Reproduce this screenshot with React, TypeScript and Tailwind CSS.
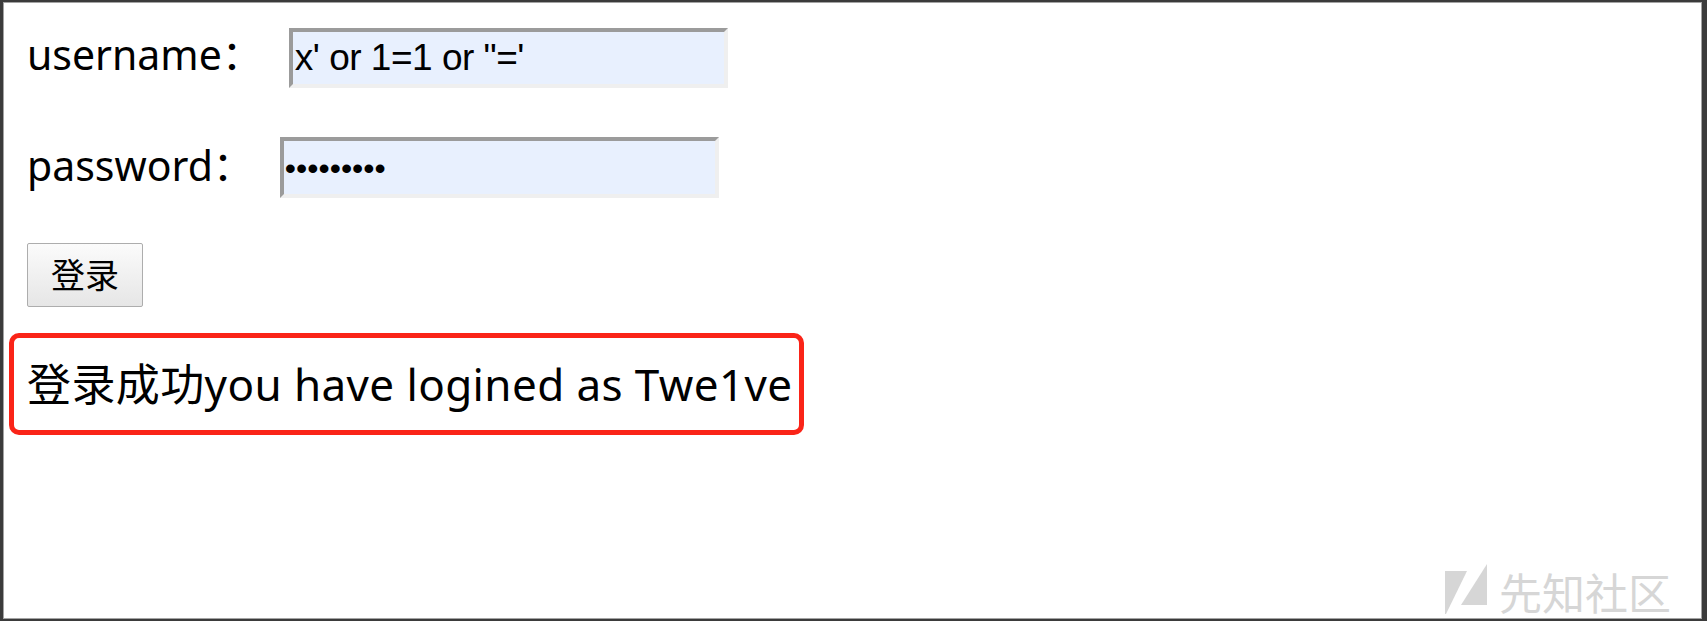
const Logo = () => (
  <svg width="46" height="50" viewBox="0 0 44 50" className="shrink-0">
    <polygon points="1,7 23,7 2,50 1,50" fill="#d6d6d6" />
    <polygon points="43,0 43,41 17,41" fill="#d6d6d6" />
  </svg>
);

const App = () => {
  const font = { fontFamily: '"Noto Sans", "Noto Sans CJK SC", sans-serif' };
  const arial = { fontFamily: '"Liberation Sans", Arial, sans-serif' };

  return (
    <div className="w-[1707px] h-[621px] bg-[#3b3b3b] pt-[2px] pl-[3px] pr-[5px] pb-[2px]">
      <div
        className="w-full h-full bg-white border border-[#a3a3a3] flex flex-col pl-[23px] pt-[25px] text-black"
        style={font}
      >
        {/* username */}
        <div className="flex items-center h-[60px]">
          <span className="text-[41px] leading-none mb-[8px]">username：</span>
          <div className="ml-[26px] w-[439px] h-[60px] bg-[#e8f0fe] border-4 border-t-[#9b9b9b] border-l-[#9b9b9b] border-r-[#efefef] border-b-[#efefef] flex items-center pl-[2px]">
            <span className="text-[37px] text-black tracking-[-0.5px]" style={arial}>
              x' or 1=1 or "='
            </span>
          </div>
        </div>

        {/* password */}
        <div className="flex items-center h-[61px] mt-[49px]">
          <span className="text-[41px] leading-none mb-[5px]">password：</span>
          <div className="ml-[26px] w-[439px] h-[61px] bg-[#e8f0fe] border-4 border-t-[#9b9b9b] border-l-[#9b9b9b] border-r-[#efefef] border-b-[#efefef] flex items-center pl-[1px]">
            <span className="text-[32px] leading-none text-black" style={arial}>
              •••••••••
            </span>
          </div>
        </div>

        {/* submit */}
        <div className="mt-[45px]">
          <button className="w-[116px] h-[64px] border border-[#adadad] rounded-[2px] bg-gradient-to-b from-[#fbfbfb] to-[#e6e6e6] text-[34px] leading-none text-black">
            登录
          </button>
        </div>

        {/* result */}
        <div className="-ml-[18px] mt-[26px] w-[795px] h-[102px] border-[5px] border-[#fa2418] rounded-[10px] flex items-center pl-[13px]">
          <span className="text-[44px] leading-none whitespace-nowrap tracking-[0.4px]">登录成功you have logined as Twe1ve</span>
        </div>

        {/* watermark */}
        <div className="mt-auto self-end flex items-end gap-[10px] mr-[30px] mb-[4px]">
          <Logo />
          <span className="text-[43px] leading-none text-[#d6d6d6] mb-[1px]" style={{ fontFamily: '"Noto Sans CJK SC", sans-serif' }}>
            先知社区
          </span>
        </div>
      </div>
    </div>
  );
};

export default App;
